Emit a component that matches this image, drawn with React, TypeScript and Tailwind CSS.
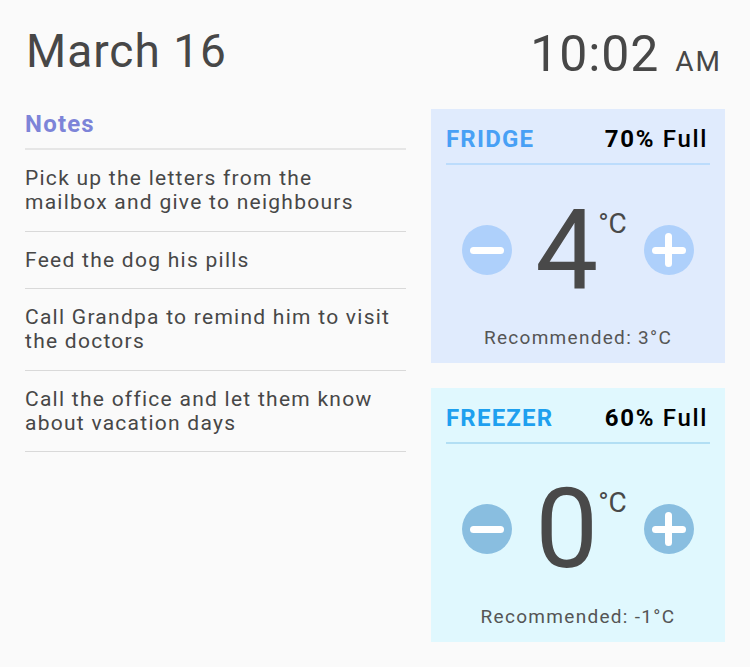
import React from "react";

const notes = [
  "Pick up the letters from the mailbox and give to neighbours",
  "Feed the dog his pills",
  "Call Grandpa to remind him to visit the doctors",
  "Call the office and let them know about vacation days",
];

function Minus() {
  return <div className="h-[7px] w-[34px] rounded-full bg-white" />;
}

function Plus() {
  return (
    <div className="relative h-[34px] w-[34px]">
      <div className="absolute left-0 top-[13.5px] h-[7px] w-[34px] rounded-full bg-white" />
      <div className="absolute top-0 left-[13.5px] h-[34px] w-[7px] rounded-full bg-white" />
    </div>
  );
}

function Card({
  title,
  full,
  temp,
  rec,
  freezer,
}: {
  title: string;
  full: string;
  temp: string;
  rec: string;
  freezer?: boolean;
}) {
  const bg = freezer ? "bg-[#e0f8fe]" : "bg-[#e0ebfd]";
  const titleC = freezer ? "text-[#1ea0ef]" : "text-[#48a0f5]";
  const line = freezer ? "bg-[#b2dff4]" : "bg-[#bcdcfc]";
  const circ = freezer ? "bg-[#89bee0]" : "bg-[#aed0fb]";
  return (
    <div className={`flex h-[254px] w-[294px] flex-col px-[15px] pt-[16px] pb-[13px] ${bg}`}>
      <div className="flex items-baseline justify-between pr-[2px] leading-[28px]">
        <span className={`text-[24px] font-bold tracking-[0.05em] ${titleC}`}>{title}</span>
        <span className="text-[24px] tracking-[0.07em] text-black">
          <span className="font-bold">{full}</span> <span className="font-medium">Full</span>
        </span>
      </div>
      <div className={`mt-[10px] h-[2px] w-full ${line}`} />
      <div className="flex flex-1 items-center justify-between px-[16px] pt-[9px]">
        <div className={`flex h-[50px] w-[50px] items-center justify-center rounded-full ${circ}`}>
          <Minus />
        </div>
        <div className="flex items-start pl-[6px] text-[#494949]">
          <span className="text-[112px] leading-none">{temp}</span>
          <span className="mt-[16px] text-[28px] leading-none">°C</span>
        </div>
        <div className={`flex h-[50px] w-[50px] items-center justify-center rounded-full ${circ}`}>
          <Plus />
        </div>
      </div>
      <div className="text-center text-[19px] leading-[24px] tracking-[1.3px] text-[#555555]">
        Recommended: {rec}
      </div>
    </div>
  );
}

export default function App() {
  return (
    <div
      className="h-[667px] w-[750px] bg-[#fafafa] pt-[28px] pl-[25px] pr-[25px]"
      style={{ fontFamily: "Roboto, 'Noto Sans', sans-serif" }}
    >
      <div className="flex h-[50px] items-start justify-between pr-[3px] text-[#474747]">
        <span className="ml-[1px] text-[46px] leading-none tracking-[1px]">March 16</span>
        <span className="mt-px flex items-baseline">
          <span className="text-[50px] leading-none tracking-[0.9px]">10:02</span>
          <span className="ml-[16px] text-[28px] leading-none tracking-[2px]">AM</span>
        </span>
      </div>
      <div className="mt-[31px] flex gap-[25px]">
        <div className="flex-1 pt-px">
          <div className="border-b-2 border-[#e6e6e6] pb-[10px] text-[24px] font-bold leading-[28px] tracking-[0.05em] text-[#7d84d8]">
            Notes
          </div>
          {notes.map((n) => (
            <div
              key={n}
              className="border-b border-[#d9d9d9] pt-[16px] pb-[16.5px] pr-[8px] text-[21px] leading-[24px] tracking-[0.06em] text-[#474747]"
            >
              {n}
            </div>
          ))}
        </div>
        <div className="flex w-[294px] flex-col gap-[25px]">
          <Card title="FRIDGE" full="70%" temp="4" rec="3°C" />
          <Card title="FREEZER" full="60%" temp="0" rec="-1°C" freezer />
        </div>
      </div>
    </div>
  );
}
